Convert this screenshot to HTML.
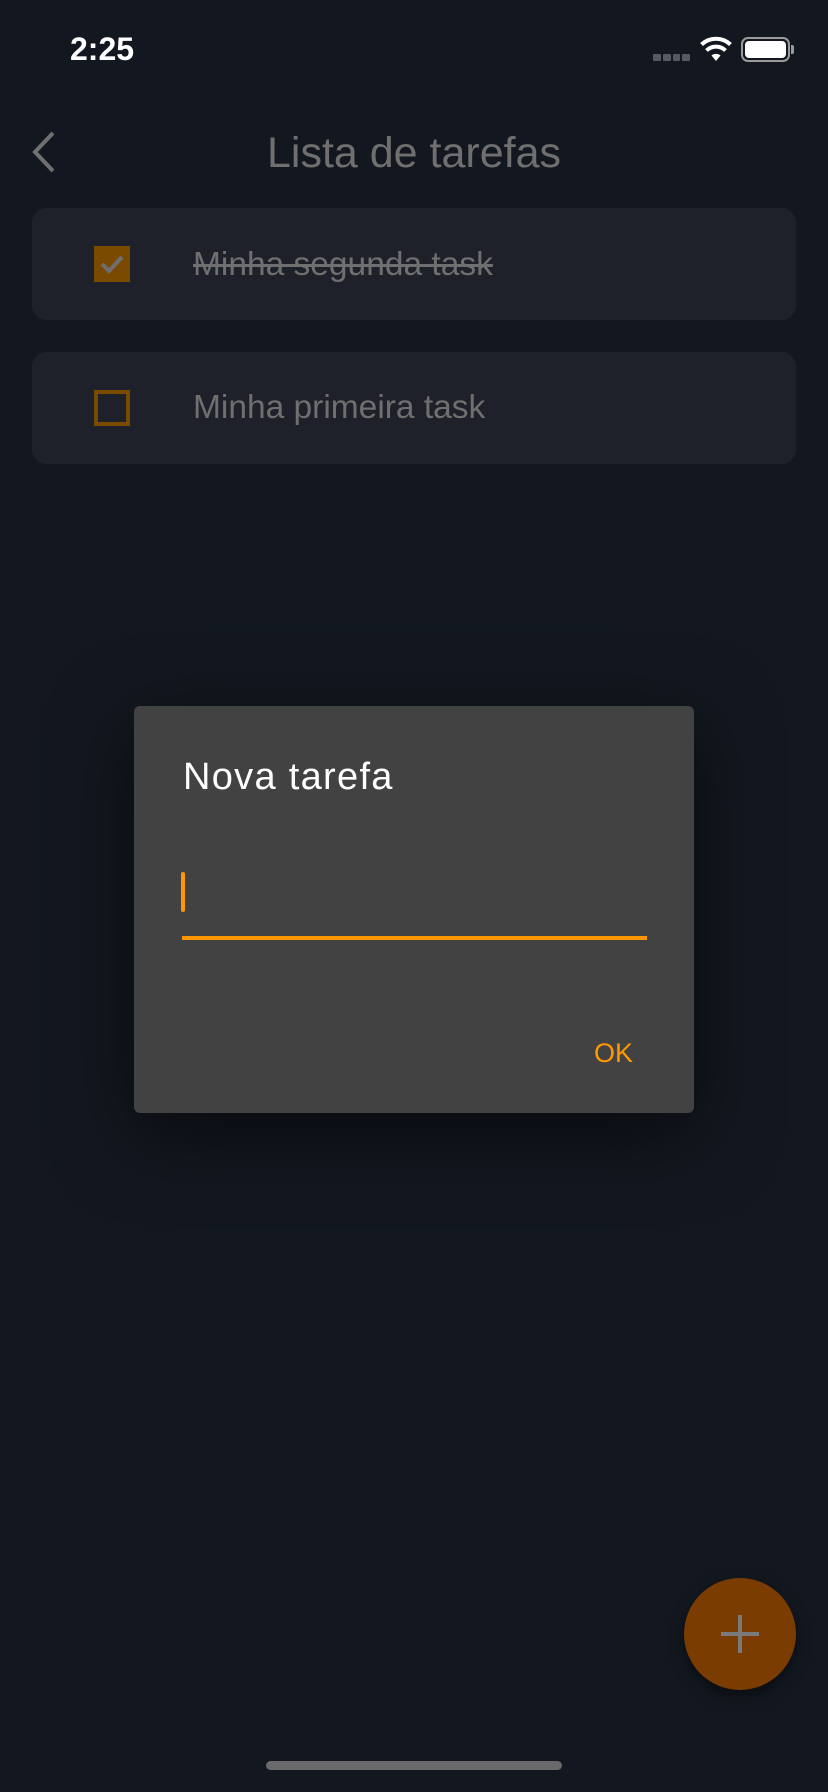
<!DOCTYPE html>
<html><head><meta charset="utf-8"><style>
*{margin:0;padding:0;box-sizing:border-box}
html,body{width:828px;height:1792px;background:#131820;overflow:hidden;font-family:"Liberation Sans",sans-serif;position:relative}
.abs{position:absolute}
.card{position:absolute;left:32px;width:764px;height:112px;background:#1e2129;border-radius:14px}
.cb{position:absolute;left:62px;top:38px;width:36px;height:36px}
.txt{position:absolute;left:161px;font-size:33.5px;color:#6f6f6f;line-height:1}
</style></head><body>
<div class="abs" style="left:70px;top:33px;font-size:32px;font-weight:bold;color:#fff;line-height:1">2:25</div>
<div class="abs" style="left:653px;top:54px;width:37px;height:7px;display:flex;gap:2px">
<i style="flex:1;background:#555a60;border-radius:1px"></i><i style="flex:1;background:#555a60;border-radius:1px"></i><i style="flex:1;background:#555a60;border-radius:1px"></i><i style="flex:1;background:#555a60;border-radius:1px"></i></div>
<svg class="abs" style="left:699px;top:36px" width="34" height="26" viewBox="0 0 34 26"><path d="M17 25 L21.5 19.5 A7 7 0 0 0 12.5 19.5Z" fill="#fff"/><path d="M7.5 14.5 A13.5 13.5 0 0 1 26.5 14.5" stroke="#fff" stroke-width="4" fill="none"/><path d="M2.5 8.5 A21 21 0 0 1 31.5 8.5" stroke="#fff" stroke-width="4" fill="none"/></svg>
<div class="abs" style="left:741px;top:37px;width:49px;height:25px;border:2px solid #9a9a9a;border-radius:7px;padding:2px"><div style="width:100%;height:100%;background:#fff;border-radius:4px"></div></div>
<div class="abs" style="left:791px;top:45px;width:3px;height:9px;background:#9a9a9a;border-radius:0 2px 2px 0"></div>
<svg class="abs" style="left:28px;top:130px" width="32" height="44" viewBox="0 0 32 44"><path d="M25 3 L7 22 L25 41" stroke="#707070" stroke-width="4" fill="none"/></svg>
<div class="abs" style="left:0;width:828px;top:129px;text-align:center;font-size:43px;color:#6f6f6f;line-height:48px">Lista de tarefas</div>
<div class="card" style="top:208px"><div class="cb" style="background:#7a4a00"><svg width="36" height="36" viewBox="0 0 36 36"><path d="M8 18 L15 25 L28 11" stroke="#6f6f6f" stroke-width="4" fill="none"/></svg></div>
<div class="txt" style="top:40px;text-decoration:line-through">Minha segunda task</div></div>
<div class="card" style="top:352px"><div class="cb" style="border:4px solid #7a4a00"></div>
<div class="txt" style="top:39px">Minha primeira task</div></div>
<div class="abs" style="left:134px;top:706px;width:560px;height:407px;background:#424242;border-radius:6px;box-shadow:0 20px 80px rgba(0,0,0,.6)">
<div class="abs" style="left:49px;top:50px;font-size:38px;letter-spacing:1.3px;color:#fff;line-height:42px">Nova tarefa</div>
<div class="abs" style="left:47px;top:166px;width:4px;height:40px;background:#ff9800;border-radius:2px"></div>
<div class="abs" style="left:48px;top:230px;width:465px;height:4px;background:#ff9800"></div>
<div class="abs" style="left:460px;top:331px;font-size:27px;color:#ff9800;line-height:32px">OK</div>
</div>
<div class="abs" style="left:684px;top:1578px;width:112px;height:112px;border-radius:50%;background:#7a3c00;box-shadow:0 6px 14px rgba(0,0,0,.5)">
<div class="abs" style="left:37px;top:54px;width:38px;height:4px;background:#7a7a7a"></div>
<div class="abs" style="left:54px;top:37px;width:4px;height:38px;background:#7a7a7a"></div></div>
<div class="abs" style="left:266px;top:1761px;width:296px;height:9px;background:#6a6a6a;border-radius:5px"></div>
</body></html>
